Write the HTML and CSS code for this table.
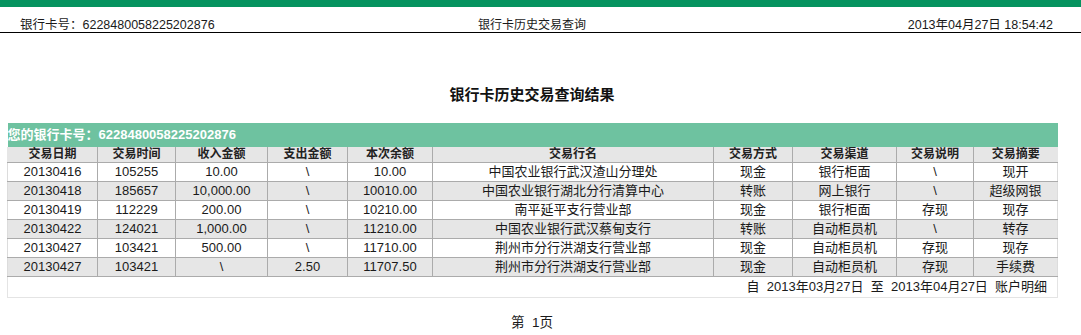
FILE: index.html
```html
<!DOCTYPE html>
<html lang="zh-CN">
<head>
<meta charset="utf-8">
<title>银行卡历史交易查询</title>
<link rel="stylesheet" href="styles.css">
</head>
<body>
<div class="topbar"></div>
<div class="header">
  <div class="h-left">银行卡号：6228480058225202876</div>
  <div class="h-center">银行卡历史交易查询</div>
  <div class="h-right">2013年04月27日 18:54:42</div>
</div>
<div class="page">
  <h1 class="title">银行卡历史交易查询结果</h1>
  <table class="grid">
    <colgroup>
      <col class="c1"><col class="c2"><col class="c3"><col class="c4"><col class="c5">
      <col class="c6"><col class="c7"><col class="c8"><col class="c9"><col class="c10">
    </colgroup>
    <thead>
      <tr class="card-row"><td colspan="10">您的银行卡号：6228480058225202876</td></tr>
      <tr class="head-row">
        <th>交易日期</th><th>交易时间</th><th>收入金额</th><th>支出金额</th><th>本次余额</th>
        <th>交易行名</th><th>交易方式</th><th>交易渠道</th><th>交易说明</th><th>交易摘要</th>
      </tr>
    </thead>
    <tbody>
      <tr><td>20130416</td><td>105255</td><td>10.00</td><td>\</td><td>10.00</td><td>中国农业银行武汉渣山分理处</td><td>现金</td><td>银行柜面</td><td>\</td><td>现开</td></tr>
      <tr class="alt"><td>20130418</td><td>185657</td><td>10,000.00</td><td>\</td><td>10010.00</td><td>中国农业银行湖北分行清算中心</td><td>转账</td><td>网上银行</td><td>\</td><td>超级网银</td></tr>
      <tr><td>20130419</td><td>112229</td><td>200.00</td><td>\</td><td>10210.00</td><td>南平延平支行营业部</td><td>现金</td><td>银行柜面</td><td>存现</td><td>现存</td></tr>
      <tr class="alt"><td>20130422</td><td>124021</td><td>1,000.00</td><td>\</td><td>11210.00</td><td>中国农业银行武汉蔡甸支行</td><td>转账</td><td>自动柜员机</td><td>\</td><td>转存</td></tr>
      <tr><td>20130427</td><td>103421</td><td>500.00</td><td>\</td><td>11710.00</td><td>荆州市分行洪湖支行营业部</td><td>现金</td><td>自动柜员机</td><td>存现</td><td>现存</td></tr>
      <tr class="alt"><td>20130427</td><td>103421</td><td>\</td><td>2.50</td><td>11707.50</td><td>荆州市分行洪湖支行营业部</td><td>现金</td><td>自动柜员机</td><td>存现</td><td>手续费</td></tr>
    </tbody>
    <tfoot>
      <tr class="foot-row"><td colspan="10">自&nbsp; 2013年03月27日&nbsp; 至&nbsp; 2013年04月27日&nbsp; 账户明细</td></tr>
    </tfoot>
  </table>
  <div class="pager">第&nbsp;&nbsp;1页</div>
</div>
</body>
</html>
```

FILE: styles.css
```css
html, body {
  margin: 0;
  padding: 0;
  background: #ffffff;
  color: #1a1a1a;
  font-family: "Liberation Sans", "Noto Sans CJK SC", sans-serif;
}

.topbar {
  height: 7px;
  background: #05935f;
}

.header {
  display: grid;
  grid-template-columns: 1fr auto 1fr;
  align-items: end;
  height: 25px;
  padding: 0 28px 0 11px;
  border-bottom: 1px solid #000000;
  font-size: 12.5px;
  line-height: 14px;
}

.h-left {
  padding-left: 9px;
}

.h-center {
  text-align: center;
  font-size: 12px;
}

.h-right {
  text-align: right;
}

.page {
  width: 1064px;
}

.title {
  margin: 52px 0 0;
  font-size: 15px;
  line-height: 20px;
  font-weight: bold;
  text-align: center;
  color: #111111;
}

.grid {
  margin: 18px 7px 0;
  width: 1050px;
  border-collapse: collapse;
  table-layout: fixed;
  font-size: 13px;
}

.c1 { width: 90px; }
.c2 { width: 78px; }
.c3 { width: 92px; }
.c4 { width: 80px; }
.c5 { width: 85px; }
.c6 { width: 281px; }
.c7 { width: 79px; }
.c8 { width: 104px; }
.c9 { width: 77px; }
.c10 { width: 84px; }

.grid td,
.grid th {
  padding: 0;
  text-align: center;
  white-space: nowrap;
  overflow: hidden;
}

.card-row td {
  height: 24px;
  background: #6ec2a0;
  color: #ffffff;
  font-weight: bold;
  text-align: left;
  font-size: 13px;
  line-height: 24px;
  padding: 0;
  border: none;
}

.head-row th {
  height: 15px;
  line-height: 15px;
  background: #e6e6e6;
  font-size: 12px;
  font-weight: bold;
  color: #222222;
  border-left: 1px solid #ababab;
  border-bottom: 1px solid #ababab;
}

.head-row th:first-child {
  border-left: 1px solid #e6e6e6;
}

tbody td {
  height: 18px;
  line-height: 18px;
  border-left: 1px solid #ababab;
  border-bottom: 1px solid #ababab;
  background: #ffffff;
}

tbody td:first-child {
  border-left: 1px solid #dcdcdc;
}

tbody td:last-child {
  border-right: 1px solid #dcdcdc;
}

tbody tr.alt td {
  background: #e6e6e6;
}

.foot-row td {
  height: 20px;
  line-height: 20px;
  text-align: right;
  padding-right: 10px;
  border: 1px solid #e4e4e4;
  border-top: none;
}

.pager {
  margin-top: 17px;
  text-align: center;
  font-size: 13.5px;
  line-height: 16px;
}
```
